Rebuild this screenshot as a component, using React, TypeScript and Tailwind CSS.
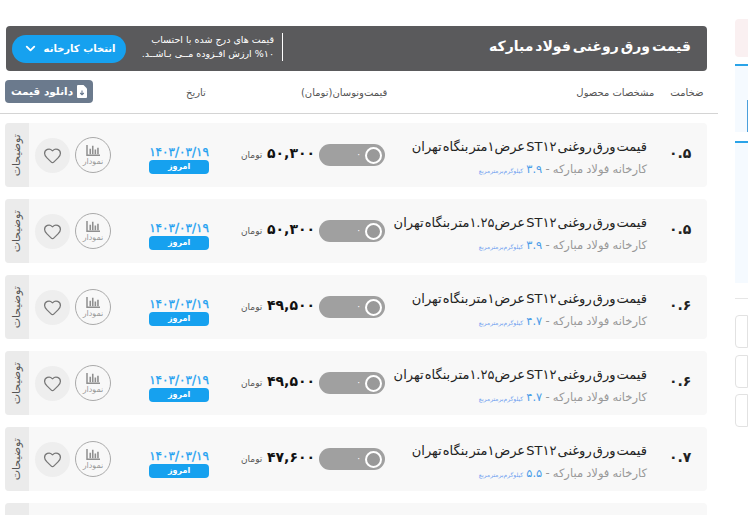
import { ChevronDown, Heart } from "lucide-react";

const rows = [
  { thick: "۰.۵", title: "قیمت ورق روغنی ST۱۲ عرض۱متر بنگاه تهران", weight: "۳.۹", price: "۵۰,۳۰۰" },
  { thick: "۰.۵", title: "قیمت ورق روغنی ST۱۲ عرض۱.۲۵متر بنگاه تهران", weight: "۳.۹", price: "۵۰,۳۰۰" },
  { thick: "۰.۶", title: "قیمت ورق روغنی ST۱۲ عرض۱متر بنگاه تهران", weight: "۴.۷", price: "۴۹,۵۰۰" },
  { thick: "۰.۶", title: "قیمت ورق روغنی ST۱۲ عرض۱.۲۵متر بنگاه تهران", weight: "۴.۷", price: "۴۹,۵۰۰" },
  { thick: "۰.۷", title: "قیمت ورق روغنی ST۱۲ عرض۱متر بنگاه تهران", weight: "۵.۵", price: "۴۷,۶۰۰" },
];

function ChartIcon() {
  return (
    <svg width="15" height="13" viewBox="0 0 16 14" fill="none" className="text-[#8f8f8f]">
      <path d="M1 1v11h14" stroke="currentColor" strokeWidth="1.6" />
      <path d="M4.5 5v6M7.2 2v9M10 6v5M12.8 4v7" stroke="currentColor" strokeWidth="1.7" />
    </svg>
  );
}

function FileIcon() {
  return (
    <svg width="10" height="13" viewBox="0 0 10 13">
      <path d="M1 0h5.5L10 3.5V12a1 1 0 0 1-1 1H1a1 1 0 0 1-1-1V1a1 1 0 0 1 1-1z" fill="#fff" />
      <path d="M5 5.5v4M3.2 8 5 9.8 6.8 8" stroke="#64748b" strokeWidth="1.1" fill="none" />
    </svg>
  );
}

function Row({ thick, title, weight, price }: (typeof rows)[number]) {
  return (
    <div className="ml-[5px] mr-[11px] mb-3 flex h-16 items-center rounded bg-[#f8f8f8]">
      <div className="flex h-full w-6 items-center justify-center rounded-l bg-[#ebebeb]">
        <span dir="rtl" className="-rotate-90 whitespace-nowrap text-[11px] text-[#555]">توضیحات</span>
      </div>
      <div className="ml-1.5 flex h-[35px] w-[35px] items-center justify-center rounded-full bg-[#eeeeee]">
        <Heart size={19} strokeWidth={1.6} className="text-[#777]" />
      </div>
      <div className="ml-[5px] flex h-9 w-9 flex-col items-center justify-center rounded-full border border-[#aaa]">
        <ChartIcon />
        <span className="text-[8px] leading-[10px] text-[#999]">نمودار</span>
      </div>
      <div className="ml-[38px] mt-2 flex w-[60px] flex-col">
        <span className="whitespace-nowrap text-center text-[12px] leading-[14px] text-[#1ea1f1] [-webkit-text-stroke:0.3px_#1ea1f1]">۱۴۰۳/۰۳/۱۹</span>
        <span className="mt-px flex h-3.5 items-center justify-center rounded-sm bg-[#16a1ef] text-[8px] font-bold text-white">امروز</span>
      </div>
      <span className="ml-8 mt-px w-[23px] text-[9px] text-[#555]">تومان</span>
      <span className="ml-[3px] mb-1 w-[48px] text-right text-[14px] font-bold text-[#111]">{price}</span>
      <div className="ml-1 flex h-[22px] w-[66px] items-center justify-end rounded-full bg-[#a0a0a0] pr-[3px]">
        <span className="mr-1 text-[9px] text-white">۰</span>
        <span className="h-[17px] w-[17px] rounded-full border-2 border-white bg-[#999]" />
      </div>
      <div dir="rtl" className="ml-[3px] mt-[5px] flex w-[259px] flex-col text-right">
        <span className="whitespace-nowrap text-[13px] leading-5 text-[#222] [word-spacing:-3px]">{title}</span>
        <span className="mt-1 whitespace-nowrap text-[11.5px] leading-4 text-[#999] [word-spacing:-0.5px]">
          کارخانه فولاد مبارکه - <span className="text-[#4d9ee8]">{weight}</span>{" "}
          <span className="text-[6px] text-[#6f9ff0]">کیلوگرم‌برمترمربع</span>
        </span>
      </div>
      <span className="ml-[22px] mb-1 w-[21px] text-center text-[14px] font-bold text-[#222]">{thick}</span>
    </div>
  );
}

export default function App() {
  return (
    <div className="flex h-[515px] w-[748px] overflow-hidden bg-white font-['DejaVu_Sans','Noto_Sans',sans-serif]">
      <main className="w-[718px] shrink-0 pt-[26px]">
        <div className="ml-1.5 mr-[11px] flex h-[45px] items-center rounded-sm bg-[#5a5a5c] pl-1.5 pr-4 text-white">
          <button className="flex h-7 w-[114px] items-center justify-center gap-1.5 rounded-full bg-[#16a1ef] text-[10px] font-bold">
            <ChevronDown size={15} strokeWidth={3} />
            <span>انتخاب کارخانه</span>
          </button>
          <div dir="rtl" className="mb-1 ml-3 w-[145px] whitespace-nowrap border-r border-white pr-2 text-[9.5px] leading-[14px]">
            <div>قیمت های درج شده با احتساب</div>
            <div>%۱۰ ارزش افـزوده مــی بـاشــد.</div>
          </div>
          <h1 dir="rtl" className="mb-1 ml-auto text-[14px] font-bold [word-spacing:-3px]">قیمت ورق روغنی فولاد مبارکه</h1>
        </div>
        <div className="flex h-[43px] items-end border-b border-[#d4d4d4] pb-[7px] pt-2">
          <div className="mb-[3px] ml-[5px] flex h-[23px] w-[88px] items-center justify-center gap-1 rounded-sm bg-[#6b7a8d] text-[10.5px] font-bold text-white">
            <span>دانلود قیمت</span>
            <FileIcon />
          </div>
          <div className="mb-[6px] flex flex-1 items-center text-[10px] text-[#555]">
            <span className="ml-[93px]">تاریخ</span>
            <span className="ml-[95px]">قیمت‌ونوسان(تومان)</span>
            <span className="ml-[189px]">مشخصات محصول</span>
            <span className="ml-[16px]">ضخامت</span>
          </div>
        </div>
        <div className="mt-[9px]">
          {rows.map((r, i) => (
            <Row key={i} {...r} />
          ))}
          <div className="ml-[5px] mr-[11px] flex h-16 rounded bg-[#f8f8f8]">
            <div className="h-full w-6 rounded-l bg-[#ebebeb]" />
          </div>
        </div>
      </main>
      <aside className="ml-[17px] flex-1 pt-[19px]">
        <div className="h-[38px] rounded-l bg-[#faf0f1]" />
        <div className="mt-[7px] flex h-[68px] items-end border-t-2 border-[#2aa3e8] bg-[#f5faff] pl-3">
          <div className="h-8 w-full bg-[#4a9fdc]" />
        </div>
        <div className="mt-[9px] h-[142px] border-t-2 border-[#2aa3e8] bg-[#f5faff]" />
        <div className="mt-[15px] h-px bg-[#e6e6e6]" />
        <div className="mt-4 flex flex-col gap-[6.5px]">
          <div className="h-[33px] rounded-l border border-[#e2e2e2]" />
          <div className="h-[33px] rounded-l border border-[#e2e2e2]" />
          <div className="h-[33px] rounded-l border border-[#e2e2e2]" />
        </div>
      </aside>
    </div>
  );
}
